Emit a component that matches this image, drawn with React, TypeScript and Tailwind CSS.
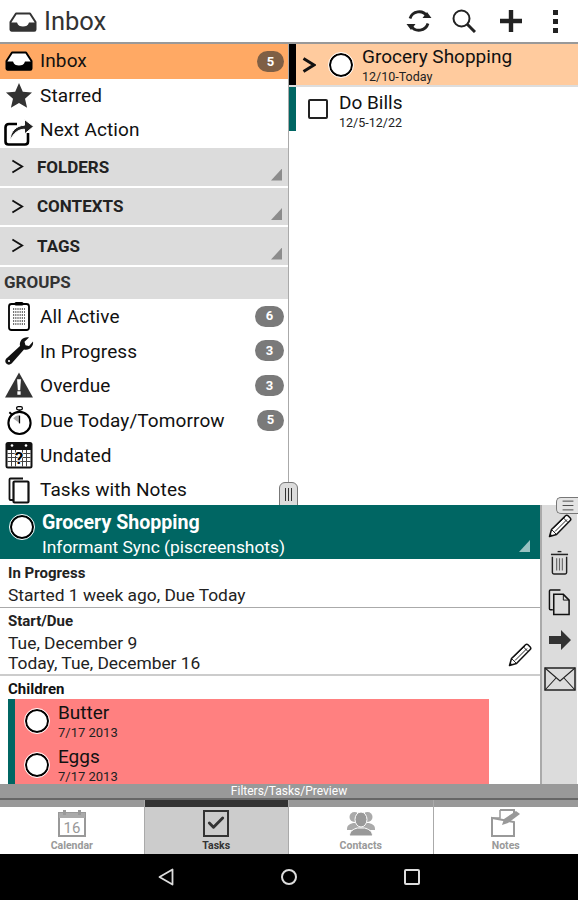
import { Check, Menu } from "lucide-react";
import type { ReactNode } from "react";

function InboxIcon({ className = "", fill = "#000" }: { className?: string; fill?: string }) {
  return (
    <svg viewBox="0 0 28 20" className={className}>
      <path d="M7 1.500h14L26.500 10v7.500a1.200 1.200 0 0 1-1.200 1.200H2.700a1.200 1.200 0 0 1-1.200-1.200V10z" fill="#fff" stroke={fill} strokeWidth="2" strokeLinejoin="round" />
      <path d="M1.500 10.500h6.500c1 3 3 4 6 4s5-1 6-4h6.500v7a1.200 1.200 0 0 1-1.200 1.200H2.700a1.200 1.200 0 0 1-1.200-1.200z" fill={fill} />
    </svg>
  );
}

function StarIcon() {
  return (
    <svg viewBox="0 0 28 28" className="w-[28px] h-[28px] shrink-0">
      <path d="M14 1l3.800 8.700 9.200.9-7 6.100 2.100 9.100-8.100-4.800-8.100 4.800 2.100-9.100-7-6.100 9.200-.9z" fill="#333" />
    </svg>
  );
}

function ShareIcon() {
  return (
    <svg viewBox="0 0 30 30" className="w-[30px] h-[30px] shrink-0">
      <path d="M13 8H5Q1.500 8 1.500 11.500V25.500q0 3 3 3h16.500q3 0 3-3V17" fill="none" stroke="#000" strokeWidth="2.600" />
      <path d="M6 24.500c.3-9.500 6.500-15 14.500-15.300V3.500L29.500 10.500 20.500 18v-4.800C14 13.500 9.500 17 6 24.500z" fill="#222" stroke="#fff" strokeWidth="1" />
    </svg>
  );
}

function ClipboardIcon() {
  return (
    <svg viewBox="0 0 24 30" className="w-[24px] h-[30px] shrink-0">
      <rect x="2" y="3" width="20" height="26" rx="2.500" fill="#fff" stroke="#000" strokeWidth="1.800" />
      <rect x="7.500" y="1" width="9" height="3.500" rx="1.500" fill="#000" />
      <path d="M6 8h12M6 11h12M6 14h12M6 17h12M6 20h12M6 23h12" stroke="#444" strokeWidth="1.400" strokeDasharray="1.200 1.000" />
    </svg>
  );
}

function WrenchIcon() {
  return (
    <svg viewBox="0 0 30 30" className="w-[30px] h-[30px] shrink-0">
      <path d="M29 5.500c1 4.500-3.500 9.500-9 8L8.500 26.500c-1.600 1.800-3.300 2.700-5.200 1.800C1.200 27.200.8 25 1.800 23.300c.4-.7 1-1.200 1.700-1.800L16 10C15 5 19 .5 25 1.500l-4.500 4.300 1 3.500 3.500.8z" fill="#111" />
      <circle cx="5" cy="25" r="1.100" fill="#fff" />
    </svg>
  );
}

function WarningIcon() {
  return (
    <svg viewBox="0 0 30 28" className="w-[30px] h-[27px] shrink-0">
      <path d="M15 .5L29.500 26.500H.5z" fill="#333" />
      <path d="M13 7.500h4l-.8 11.500h-2.400z" fill="#fff" />
      <rect x="13.300" y="20" width="3.400" height="3.600" fill="#fff" />
    </svg>
  );
}

function StopwatchIcon() {
  return (
    <svg viewBox="0 0 28 32" className="w-[27px] h-[31px] shrink-0">
      <circle cx="14" cy="18.500" r="11.500" fill="#fff" stroke="#000" strokeWidth="2.200" />
      <rect x="11" y="1.500" width="6" height="3.500" rx="1.700" fill="none" stroke="#000" strokeWidth="1.300" />
      <path d="M14 5v2M3.500 7.500l3.500 3" stroke="#000" strokeWidth="2" />
      <path d="M14 18.500V10.500A8 8 0 0 0 7.500 14z" fill="#aaa" />
      <path d="M14 11v8" stroke="#000" strokeWidth="1.300" />
    </svg>
  );
}

function CalendarQuestionIcon() {
  return (
    <svg viewBox="0 0 28 28" className="w-[28px] h-[28px] shrink-0">
      <rect x="0.500" y="1" width="27" height="26.500" rx="2.500" fill="#111" />
      <circle cx="7" cy="4.500" r="1.300" fill="#fff" />
      <circle cx="21" cy="4.500" r="1.300" fill="#fff" />
      <rect x="2.500" y="9" width="23" height="16.500" fill="#fff" />
      <path d="M2.500 12.500h23M2.500 16.500h23M2.500 20.500h23M6.500 9v16.500M10.500 9v16.500M17.500 9v16.500M21.500 9v16.500" stroke="#444" strokeWidth="1" />
      <text x="14" y="23" textAnchor="middle" fontSize="17" fontWeight="700" fontFamily="Roboto, sans-serif" fill="#000" stroke="#fff" strokeWidth="1.400" paintOrder="stroke">?</text>
    </svg>
  );
}

function SheetsIcon() {
  return (
    <svg viewBox="0 0 22 28" className="w-[22px] h-[28px] shrink-0">
      <path d="M5 24H2.500q-1 0-1-1V3.500q0-1 1-1H15" fill="none" stroke="#111" strokeWidth="1.800" />
      <rect x="5.500" y="5.500" width="15" height="21" rx="1" fill="#fff" stroke="#111" strokeWidth="2.200" />
    </svg>
  );
}

function CopyIcon({ className = "" }: { className?: string }) {
  return (
    <svg viewBox="0 0 24 28" className={className}>
      <path d="M5 22H2.500q-1 0-1-1V2.500q0-1 1-1H13" fill="none" stroke="#111" strokeWidth="1.500" />
      <path d="M6 6h10l6 6v15H6z" fill="none" stroke="#111" strokeWidth="1.600" />
      <path d="M16 6v6h6" fill="none" stroke="#111" strokeWidth="1" />
    </svg>
  );
}

function PencilIcon({ className = "" }: { className?: string }) {
  return (
    <svg viewBox="0 0 24 24" className={className}>
      <path d="M1.500 22.500l2-7L17.500 1.800a1.800 1.800 0 0 1 2.500 0l2.200 2.200a1.800 1.800 0 0 1 0 2.500L8.500 20.500z" fill="#fff" stroke="#111" strokeWidth="1.500" strokeLinejoin="round" />
      <path d="M3.500 15.500l5 5M15.500 4l4.500 4.500M5.500 14L17 3M7 17.500L19 5.500" fill="none" stroke="#111" strokeWidth="0.900" />
      <path d="M1.500 22.500l.8-3 2.200 2.200z" fill="#111" />
    </svg>
  );
}

function TrashIcon({ className = "" }: { className?: string }) {
  return (
    <svg viewBox="0 0 20 26" className={className}>
      <path d="M8 1h4" stroke="#222" strokeWidth="1.400" />
      <path d="M1 4h18" stroke="#222" strokeWidth="1.600" />
      <path d="M2.500 6.500v16.500q0 1.500 1.500 1.500h12q1.500 0 1.500-1.500V6.500" fill="none" stroke="#222" strokeWidth="1.500" />
      <path d="M7 8v13M10 8v13M13 8v13" stroke="#666" strokeWidth="1.200" />
    </svg>
  );
}

function Circle() {
  return <div className="w-[24px] h-[24px] shrink-0 rounded-full bg-white border-2 border-black outline-1 outline-white" />;
}

function Chevron({ className = "", width = 2 }: { className?: string; width?: number }) {
  return (
    <svg viewBox="0 0 14 16" className={className}>
      <path d="M1.500 1.500L12 8 1.500 14.500" fill="none" stroke="#111" strokeWidth={width} />
    </svg>
  );
}

function Badge({ n, dark = false, wide = true }: { n: number; dark?: boolean; wide?: boolean }) {
  return (
    <span className={`${wide ? "w-[29px]" : "w-[27px]"} h-[21px] rounded-full flex items-center justify-center text-[13px] font-bold text-white ${dark ? "bg-[#7f5f45]" : "bg-[#7a7a7a]"}`}>
      {n}
    </span>
  );
}

function NavRow({ icon, label, badge, selected = false, low = false }: { icon: ReactNode; label: string; badge?: ReactNode; selected?: boolean; low?: boolean }) {
  return (
    <div className={`h-[34.700px] flex items-center shrink-0 ${selected ? "bg-[#ffa964]" : ""}`}>
      <div className="w-[40px] pl-[3px] pr-[5px] flex items-center justify-center shrink-0">{icon}</div>
      <span className={`flex-1 text-[19px] text-[#111] tracking-[0.1px] ${low ? "pt-[2px]" : ""}`}>{label}</span>
      {badge && <span className="pr-[4px] flex">{badge}</span>}
    </div>
  );
}

function SectionRow({ label }: { label: string }) {
  return (
    <div className="relative h-[37.500px] mb-[2px] shrink-0 bg-[#dcdcdc] flex items-center">
      <Chevron className="w-[13px] h-[15px] ml-[11px] mr-[13px]" />
      <span className="text-[17px] font-bold text-[#222] pt-[1px]">{label}</span>
      <div className="absolute right-[6px] bottom-[5px] w-[11px] h-[12px] bg-[#8c8c8c] [clip-path:polygon(100%_0,100%_100%,0_100%)]" />
    </div>
  );
}

function HeaderIcons() {
  return (
    <div className="flex items-center pr-[20px]">
      <svg viewBox="0 0 28 28" className="w-[28px] h-[28px]">
        <path d="M5 11.500A9.500 9.500 0 0 1 22 9M23 16.500A9.500 9.500 0 0 1 6 19" fill="none" stroke="#222" strokeWidth="2.800" />
        <path d="M17.500 11h9L22 5zM1.500 17h9L6 23z" fill="#222" />
      </svg>
      <svg viewBox="0 0 24 24" className="w-[24px] h-[24px] ml-[19px]">
        <circle cx="9.500" cy="9.500" r="8" fill="none" stroke="#222" strokeWidth="2" />
        <path d="M15 15l8 8" stroke="#222" strokeWidth="3" />
      </svg>
      <svg viewBox="0 0 24 24" className="w-[24px] h-[24px] ml-[23px]">
        <path d="M12 1v22M1 12h22" stroke="#222" strokeWidth="4.400" />
      </svg>
      <div className="flex flex-col gap-[4px] w-[5px] ml-[30px]">
        <span className="w-[5px] h-[5px] bg-[#222]" />
        <span className="w-[5px] h-[5px] bg-[#222]" />
        <span className="w-[5px] h-[5px] bg-[#222]" />
      </div>
    </div>
  );
}

function Tab({ label, active = false, icon }: { label: string; active?: boolean; icon: ReactNode }) {
  return (
    <div className="w-[144.500px] flex flex-col border-r border-[#aaa] last:border-r-0">
      <div className={`h-[7px] ${active ? "bg-[#333]" : "bg-[#999]"}`} />
      <div className={`flex-1 flex flex-col items-center pt-[2px] ${active ? "bg-[#cccccc]" : "bg-white"}`}>
        <div className="h-[28px] flex items-center justify-center">{icon}</div>
        <span className={`text-[10.500px] font-bold leading-[13px] mt-[2px] ${active ? "text-[#333]" : "text-[#999]"}`}>{label}</span>
      </div>
    </div>
  );
}

function ChildTask({ name, date }: { name: string; date: string }) {
  return (
    <div className="h-[44px] flex items-center pl-[10px] shrink-0">
      <Circle />
      <div className="ml-[9px] flex flex-col">
        <span className="text-[19px] leading-[23px] text-[#111]">{name}</span>
        <span className="text-[13px] leading-[18px] text-[#222]">{date}</span>
      </div>
    </div>
  );
}

export default function App() {
  return (
    <div className="w-[578px] h-[900px] flex flex-col overflow-hidden bg-white font-['Roboto',sans-serif]">
      {/* action bar */}
      <div className="h-[44px] shrink-0 flex items-center justify-between border-b-2 border-[#999]">
        <div className="flex items-center pl-[9px]">
          <InboxIcon className="w-[28px] h-[20px] mt-[1px]" fill="#333" />
          <span className="ml-[7px] text-[25.500px] text-[#333] pt-[1px]">Inbox</span>
        </div>
        <HeaderIcons />
      </div>

      {/* filters and task list */}
      <div className="h-[461px] shrink-0 flex relative">
        <div className="w-[289px] shrink-0 border-r border-[#aaa] flex flex-col overflow-hidden">
          <NavRow selected icon={<InboxIcon className="w-[28px] h-[20px] shrink-0" />} label="Inbox" badge={<Badge n={5} dark wide={false} />} />
          <NavRow icon={<StarIcon />} label="Starred" />
          <NavRow icon={<ShareIcon />} label="Next Action" />
          <SectionRow label="FOLDERS" />
          <SectionRow label="CONTEXTS" />
          <SectionRow label="TAGS" />
          <div className="h-[32.200px] shrink-0 bg-[#dcdcdc] flex items-center pl-[4px] text-[17px] font-bold text-[#333]">GROUPS</div>
          <NavRow low icon={<ClipboardIcon />} label="All Active" badge={<Badge n={6} />} />
          <NavRow low icon={<WrenchIcon />} label="In Progress" badge={<Badge n={3} />} />
          <NavRow low icon={<WarningIcon />} label="Overdue" badge={<Badge n={3} />} />
          <NavRow low icon={<StopwatchIcon />} label="Due Today/Tomorrow" badge={<Badge n={5} wide={false} />} />
          <NavRow low icon={<CalendarQuestionIcon />} label="Undated" />
          <NavRow low icon={<SheetsIcon />} label="Tasks with Notes" />
        </div>

        <div className="flex-1 flex flex-col">
          <div className="h-[43px] flex items-center bg-[#ffcb9e] border-b-2 border-[#ddd]">
            <div className="w-[7px] h-full bg-black" />
            <Chevron className="w-[14px] h-[16px] ml-[6px] shrink-0" width={3} />
            <div className="ml-[13px]"><Circle /></div>
            <div className="ml-[9px] flex flex-col">
              <span className="text-[19px] leading-[24px] text-[#111]">Grocery Shopping</span>
              <span className="text-[12.500px] leading-[15px] text-[#222]">12/10-Today</span>
            </div>
          </div>
          <div className="h-[44px] flex items-center">
            <div className="w-[7px] h-full bg-[#006663]" />
            <div className="ml-[12px] w-[20px] h-[20px] rounded-[2px] border-2 border-[#222] shrink-0" />
            <div className="ml-[11px] flex flex-col pt-[2px]">
              <span className="text-[19px] leading-[25px] text-[#111]">Do Bills</span>
              <span className="text-[12.500px] leading-[16px] text-[#222]">12/5-12/22</span>
            </div>
          </div>
        </div>

        <div className="absolute left-[279px] bottom-[-1px] w-[19px] h-[24px] rounded-t-[6px] bg-[#dcdcdc] border border-[#777] flex justify-center items-center gap-[2px]">
          <span className="w-[1px] h-[13px] bg-[#333]" />
          <span className="w-[1px] h-[13px] bg-[#333]" />
          <span className="w-[1px] h-[13px] bg-[#333]" />
        </div>
      </div>

      {/* task preview */}
      <div className="h-[279px] shrink-0 flex relative">
        <div className="flex-1 min-w-0 flex flex-col overflow-hidden">
          <div className="relative h-[54px] shrink-0 bg-[#006663] flex items-center">
            <div className="ml-[9px] -mt-[10px] p-[1px]"><Circle /></div>
            <div className="ml-[7px] flex flex-col pt-[4px]">
              <span className="text-[19.600px] leading-[26px] font-bold text-white">Grocery Shopping</span>
              <span className="text-[17.400px] leading-[22px] text-white">Informant Sync (piscreenshots)</span>
            </div>
            <div className="absolute right-[10px] bottom-[7px] w-[11px] h-[12px] bg-[#99c2c1] [clip-path:polygon(100%_0,100%_100%,0_100%)]" />
          </div>
          <div className="h-[49px] shrink-0 border-b border-[#aaa] pl-[8px] flex flex-col pt-[4px]">
            <span className="text-[15px] leading-[20px] font-bold text-[#222]">In Progress</span>
            <span className="text-[17.400px] leading-[25px] text-[#222]">Started 1 week ago, Due Today</span>
          </div>
          <div className="relative h-[68px] shrink-0 border-b-2 border-[#ccc] pl-[8px] flex flex-col pt-[3px]">
            <span className="text-[15px] leading-[20px] font-bold text-[#222]">Start/Due</span>
            <span className="text-[17.400px] leading-[20px] mt-[2px] text-[#222]">Tue, December 9</span>
            <span className="text-[17.400px] leading-[20px] text-[#222]">Today, Tue, December 16</span>
            <PencilIcon className="absolute right-[8px] bottom-[7px] w-[24px] h-[24px]" />
          </div>
          <div className="pl-[8px] pt-[3px] flex flex-col flex-1 min-h-0">
            <span className="text-[15px] leading-[20px] font-bold text-[#111]">Children</span>
            <div className="flex w-[481px] flex-1 min-h-0 overflow-hidden">
              <div className="w-[7px] bg-[#006663] shrink-0" />
              <div className="flex-1 bg-[#ff8080] flex flex-col">
                <ChildTask name="Butter" date="7/17 2013" />
                <ChildTask name="Eggs" date="7/17 2013" />
              </div>
            </div>
          </div>
        </div>

        <div className="w-[37px] shrink-0 bg-[#dcdcdc] border-l-2 border-[#aaa] mr-[1px] flex flex-col items-center pt-[9px]">
          <PencilIcon className="w-[24px] h-[24px]" />
          <TrashIcon className="w-[19px] h-[26px] mt-[12px]" />
          <CopyIcon className="w-[23px] h-[28px] mt-[12px]" />
          <svg viewBox="0 0 22 20" className="w-[22px] h-[20px] mt-[14px]">
            <path d="M0 6h12V0l10 10-10 10v-6H0z" fill="#333" />
          </svg>
          <svg viewBox="0 0 32 24" className="w-[32px] h-[24px] mt-[17px] shrink-0">
            <rect x="1" y="1" width="30" height="22" fill="none" stroke="#222" strokeWidth="1.500" />
            <path d="M1 1l15 13L31 1M1 23l11-12M31 23L20 11" fill="none" stroke="#222" strokeWidth="1.100" />
          </svg>
        </div>

        <div className="absolute right-0 top-[-8px] w-[22px] h-[17px] rounded-l-[5px] bg-[#e4e4e4] border border-[#777] border-r-0 flex items-center justify-center">
          <Menu className="w-[16px] h-[15px] text-[#444]" strokeWidth={1.500} />
        </div>
      </div>

      {/* pane label */}
      <div className="h-[16px] shrink-0 bg-[#999] border-b-2 border-[#666] flex items-center justify-center text-[12px] text-white">
        Filters/Tasks/Preview
      </div>

      {/* tabs */}
      <div className="h-[54px] shrink-0 flex">
        <Tab
          label="Calendar"
          icon={
            <svg viewBox="0 0 28 28" className="w-[28px] h-[28px]">
              <path d="M1 4h26v23H1z" fill="none" stroke="#999" strokeWidth="2" />
              <rect x="1" y="4" width="26" height="5" fill="#aaa" />
              <rect x="5" y="1" width="3" height="5" fill="#999" />
              <rect x="20" y="1" width="3" height="5" fill="#999" />
              <text x="14" y="24" textAnchor="middle" fontSize="15" fontFamily="Roboto, sans-serif" fill="#999">16</text>
            </svg>
          }
        />
        <Tab
          label="Tasks"
          active
          icon={
            <div className="w-[26px] h-[27px] border-2 border-[#333] flex items-center justify-center">
              <Check className="w-[20px] h-[20px] text-[#333]" strokeWidth={3.500} />
            </div>
          }
        />
        <Tab
          label="Contacts"
          icon={
            <svg viewBox="0 0 28 26" className="w-[28px] h-[26px]">
              <circle cx="7.500" cy="7" r="5" fill="#aaa" />
              <circle cx="20.500" cy="7" r="5" fill="#aaa" />
              <path d="M0 19c0-4 3-5 6-6h16c3 1 6 2 6 6v1H0z" fill="#aaa" />
              <ellipse cx="14" cy="9.500" rx="6" ry="7.500" fill="#999" stroke="#fff" strokeWidth="1" />
              <path d="M2.500 26c0-5 4-7 8-8h7c4 1 8 3 8 8z" fill="#999" stroke="#fff" strokeWidth="1" />
            </svg>
          }
        />
        <Tab
          label="Notes"
          icon={
            <svg viewBox="0 0 30 28" className="w-[30px] h-[28px]">
              <path d="M9 1h14v3M23 13v14H1V9z" fill="none" stroke="#999" strokeWidth="2" />
              <path d="M9 1v8H1" fill="none" stroke="#999" strokeWidth="1.500" />
              <path d="M11 16l2-6L25 2l4 3-12 9z" fill="#999" />
            </svg>
          }
        />
      </div>

      {/* system nav */}
      <div className="flex-1 bg-black flex items-center justify-center gap-[107px]">
        <svg viewBox="0 0 16 18" className="w-[16px] h-[18px]">
          <path d="M14.500 1.500v15L1.500 9z" fill="none" stroke="#ddd" strokeWidth="1.800" strokeLinejoin="round" />
        </svg>
        <div className="w-[16px] h-[16px] rounded-full border-2 border-[#ddd]" />
        <div className="w-[16px] h-[16px] rounded-[2px] border-2 border-[#ddd]" />
      </div>
    </div>
  );
}
